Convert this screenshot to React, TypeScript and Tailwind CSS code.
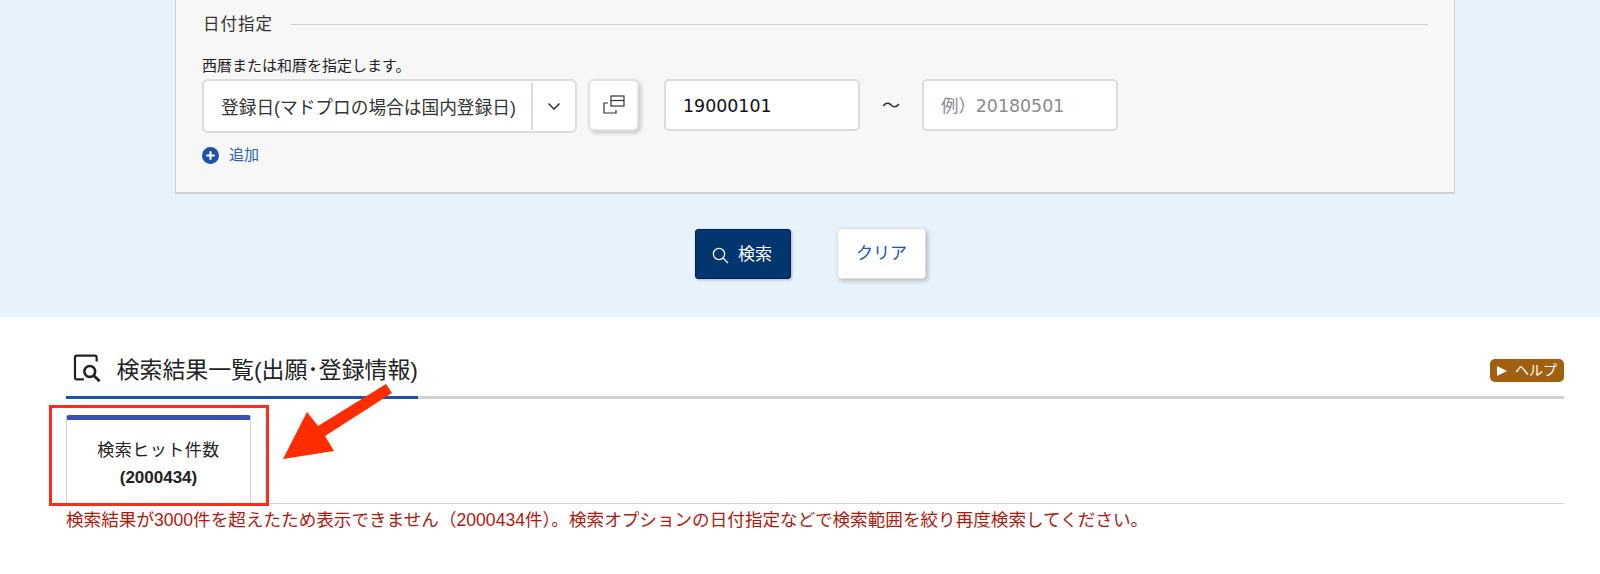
import React from "react";

const jp = "font-['Liberation_Sans','Noto_Sans_CJK_JP',sans-serif]";
const inputCls = "w-[196px] h-[52px] bg-white border-2 border-[#dcdcdc] rounded-[5px] flex items-center pl-[17px] pt-[2px] text-[17.4px] font-['DejaVu_Sans','Noto_Sans_CJK_JP',sans-serif]";

export default function App() {
  return (
    <div className={`relative w-[1600px] h-[574px] overflow-hidden bg-white text-[#222] ${jp}`}>
      <section className="h-[317px] bg-[#e8f2fb] pl-[175px] pr-[145px]">
        <div className="h-[194px] bg-[#f7f7f7] border border-t-0 border-[#d0d0d0] border-b-2 pl-[27px]">
          <div className="flex items-center h-[49px] gap-[18px] pr-[26px]">
            <span className="text-[16.5px] tracking-[1px] text-[#333]">日付指定</span>
            <div className="flex-1 h-px bg-[#cfcfcf]" />
          </div>
          <div className="text-[15px] leading-[20px] mt-[7px] -ml-[1px] text-[#222]">西暦または和暦を指定します。</div>
          <div className="flex items-start mt-[3px] -ml-[1px]">
            <div className="w-[375px] h-[54px] bg-white border-2 border-[#dcdcdc] rounded-[6px] flex items-center">
              <span className="w-[327px] pl-[17px] pt-[4px] text-[17.7px] text-[#333] whitespace-nowrap">登録日(マドプロの場合は国内登録日)</span>
              <div className="w-[2px] h-[48px] bg-[#dcdcdc]" />
              <div className="flex-1 flex justify-center">
                <svg width="14" height="9" viewBox="0 0 14 9" fill="none" stroke="#222" strokeWidth="1.3"><path d="M1.5 1.5 7 7l5.5-5.5" /></svg>
              </div>
            </div>
            <div className="ml-[11px] w-[51px] h-[52px] bg-white border-2 border-[#e2e2e2] rounded-[6px] shadow-[2px_2px_4px_rgba(0,0,0,0.2)] flex items-center justify-center">
              <svg width="22" height="20" viewBox="0 0 22 20" fill="none" stroke="#333" strokeWidth="1.2">
                <rect x="8" y="1" width="13" height="10" />
                <path d="M8 5.5h13" />
                <path d="M5 8H1v10h12v-3" />
              </svg>
            </div>
            <div className={`ml-[25px] ${inputCls} text-[#111]`}>19000101</div>
            <span className="w-[62px] h-[52px] flex items-center justify-center pt-[2px] text-[18px] text-[#333]">〜</span>
            <div className={`${inputCls} text-[#8a8a8a]`}>例）20180501</div>
          </div>
          <div className="flex items-center gap-[10px] mt-[11px] -ml-[1px]">
            <svg width="17" height="17" viewBox="0 0 16 16"><circle cx="8" cy="8" r="8" fill="#1a53a8" /><path d="M8 4v8M4 8h8" stroke="#fff" strokeWidth="2" /></svg>
            <span className="text-[15px] text-[#2a62b4]">追加</span>
          </div>
        </div>
        <div className="flex justify-center items-start gap-[46px] mt-[35px] pr-[9px]">
          <div className="w-[96px] h-[50px] bg-[#03356f] border border-[#02206a] rounded-[3px] shadow-[1px_1px_3px_rgba(0,0,0,0.25)] flex items-center justify-center gap-[9px] pt-[2px] pr-[2px] text-white text-[17px]">
            <svg width="17" height="17" viewBox="0 0 17 17" fill="none" stroke="#fff" strokeWidth="1.3"><circle cx="7" cy="7" r="5.6" /><path d="m11 11 5 5" /></svg>
            <span>検索</span>
          </div>
          <div className="w-[89px] h-[51px] -mt-[1px] bg-white border border-[#dedede] rounded-[4px] shadow-[2px_2px_4px_rgba(0,0,0,0.22)] flex items-center justify-center pt-[1px] text-[#1a56ad] text-[17px]">クリア</div>
        </div>
      </section>

      <section className="pl-[66px] pr-[36px]">
        <div className="flex items-end h-[82px] border-b-[3px] border-[#d2d2d2]">
          <div className="relative -mb-[3px] w-[352px] h-[50px] border-b-[3px] border-[#1a53a8] flex items-start pt-[3px]">
            <svg className="ml-[7px] mt-[2px]" width="30" height="30" viewBox="0 0 29 29" fill="none" stroke="#222" strokeWidth="2.2">
              <path d="M24 7V3a2 2 0 0 0-2-2H4a2 2 0 0 0-2 2v20a2 2 0 0 0 2 2h7" />
              <circle cx="17" cy="17" r="5.5" strokeWidth="2.6" />
              <path d="m21 21 6 6" strokeWidth="2.8" />
            </svg>
            <span className="ml-[15px] mt-[2px] text-[22.9px] leading-[32px] text-[#222] whitespace-nowrap">検索結果一覧(出願･登録情報)</span>
          </div>
          <div className="ml-auto mb-[6px] w-[74px] h-[23px] bg-[#a06010] rounded-[5px] flex items-center justify-center gap-[8px] text-white text-[14px] self-end relative -top-[8px]">
            <svg width="10" height="10" viewBox="0 0 9 9"><path d="M0 0 9 4.5 0 9z" fill="#fff" /></svg>
            <span>ヘルプ</span>
          </div>
        </div>
        <div className="mt-[16px] h-[89px] border-b border-[#d2d2d2]">
          <div className="w-[185px] h-[88px] border-x border-[#d4d4d8] border-t-[5px] border-t-[#3a50b4] rounded-t-[3px] flex flex-col items-center pt-[19px]">
            <span className="text-[17px] leading-[24px] tracking-[0.5px] text-[#222]">検索ヒット件数</span>
            <span className="text-[17px] leading-[24px] mt-[3px] font-bold text-[#222]">(2000434)</span>
          </div>
        </div>
        <p className="text-[17.6px] leading-[24px] mt-[4px] text-[#b0190c] whitespace-nowrap">検索結果が3000件を超えたため表示できません（2000434件）。検索オプションの日付指定などで検索範囲を絞り再度検索してください。</p>
      </section>

      <div className="absolute left-[49px] top-[405px] w-[220px] h-[101px] border-[3px] border-[#ff2a1a]" />
      <svg className="absolute left-[270px] top-[380px]" width="130" height="90" viewBox="0 0 130 90">
        <path d="M116 4 122 13 55 56 64 71 13 79 37 32 48 46Z" fill="#ff2c00" />
      </svg>
    </div>
  );
}
